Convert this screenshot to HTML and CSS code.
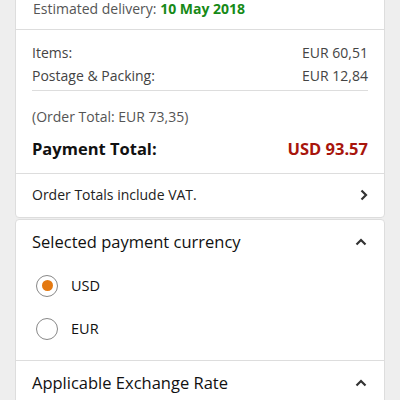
FILE: index.html
```html
<!DOCTYPE html>
<html>
<head>
    <title>Order Summary</title>
    <link rel="stylesheet" href="styles.css">
</head>
<body>
    <div class="card card-top">
        <div class="delivery">Estimated delivery: <span class="green">10 May 2018</span></div>
        <div class="section">
            <div class="line">
                <span>Items:</span>
                <span>EUR 60,51</span>
            </div>
            <div class="line">
                <span>Postage &amp; Packing:</span>
                <span>EUR 12,84</span>
            </div>
        </div>
        <div class="totals">
            <div class="order-total">(Order Total: EUR 73,35)</div>
            <div class="line payment">
                <span>Payment Total:</span>
                <span class="red">USD 93.57</span>
            </div>
        </div>
        <div class="link-row">
            <span>Order Totals include VAT.</span>
            <svg width="10" height="14" viewBox="0 0 10 14"><path d="M3.5 2.5 L8 7 L3.5 11.5" fill="none" stroke="#333" stroke-width="2.2"/></svg>
        </div>
    </div>

    <div class="card">
        <div class="head">
            <span>Selected payment currency</span>
            <svg width="14" height="10" viewBox="0 0 14 10"><path d="M2.5 7.5 L7 3 L11.5 7.5" fill="none" stroke="#333" stroke-width="2.2"/></svg>
        </div>
        <div class="options">
            <label class="option"><span class="radio checked"></span>USD</label>
            <label class="option"><span class="radio"></span>EUR</label>
        </div>
        <div class="head head-border">
            <span>Applicable Exchange Rate</span>
            <svg width="14" height="10" viewBox="0 0 14 10"><path d="M2.5 7.5 L7 3 L11.5 7.5" fill="none" stroke="#333" stroke-width="2.2"/></svg>
        </div>
    </div>
</body>
</html>
```

FILE: styles.css
```css
body {
    margin: 0;
    background-color: #eeeeee;
    font-family: "Open Sans", "Noto Sans", Arial, sans-serif;
    color: #222;
}

.card {
    margin: 0 15px;
    background-color: white;
    border: 1px solid #dddddd;
    border-radius: 4px;
}

.card-top {
    margin-top: -12px;
    margin-bottom: 1px;
}

.delivery {
    padding: 10px 17px;
    font-size: 14px;
    line-height: 20px;
    color: #555;
    border-bottom: 1px solid #dddddd;
}

.green {
    color: #178a17;
    font-weight: bold;
}

.section {
    margin: 0 16px;
    padding: 11px 0 3px;
    border-bottom: 1px solid #dddddd;
}

.line {
    display: flex;
    justify-content: space-between;
    font-size: 14px;
    line-height: 23px;
    color: #444;
}

.totals {
    padding: 16px 16px 12px;
    border-bottom: 1px solid #dddddd;
}

.order-total {
    font-size: 14px;
    line-height: 20px;
    color: #555;
    margin-bottom: 10px;
}

.payment {
    font-size: 16.5px;
    font-weight: bold;
    line-height: 24px;
    color: #111;
}

.red {
    color: #a8150c;
}

.link-row {
    display: flex;
    justify-content: space-between;
    align-items: center;
    padding: 11px 16px 12px;
    font-size: 14px;
    line-height: 20px;
    color: #222;
}

.head {
    display: flex;
    justify-content: space-between;
    align-items: center;
    padding: 10px 16px 10px;
    font-size: 16.5px;
    line-height: 24px;
    color: #111;
}

.head-border {
    border-top: 1px solid #dddddd;
}

.options {
    padding: 0 0 10px;
}

.option {
    display: flex;
    align-items: center;
    height: 43px;
    padding-left: 20px;
    font-size: 14.5px;
    color: #111;
}

.radio {
    width: 20px;
    height: 20px;
    border: 1px solid #888;
    border-radius: 50%;
    margin-right: 13px;
    display: flex;
    align-items: center;
    justify-content: center;
}

.radio.checked::after {
    content: "";
    width: 11px;
    height: 11px;
    border-radius: 50%;
    background-color: #e47911;
}
```
